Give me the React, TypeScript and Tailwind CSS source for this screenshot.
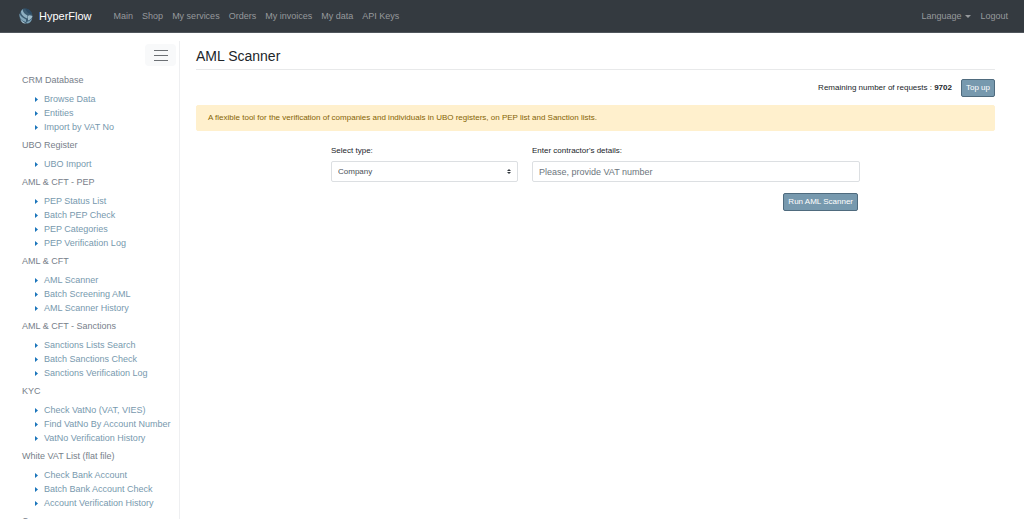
import React from "react";

type Group = { title: string; items: string[] };

const groups: Group[] = [
  { title: "CRM Database", items: ["Browse Data", "Entities", "Import by VAT No"] },
  { title: "UBO Register", items: ["UBO Import"] },
  { title: "AML & CFT - PEP", items: ["PEP Status List", "Batch PEP Check", "PEP Categories", "PEP Verification Log"] },
  { title: "AML & CFT", items: ["AML Scanner", "Batch Screening AML", "AML Scanner History"] },
  { title: "AML & CFT - Sanctions", items: ["Sanctions Lists Search", "Batch Sanctions Check", "Sanctions Verification Log"] },
  { title: "KYC", items: ["Check VatNo (VAT, VIES)", "Find VatNo By Account Number", "VatNo Verification History"] },
  { title: "White VAT List (flat file)", items: ["Check Bank Account", "Batch Bank Account Check", "Account Verification History"] },
  { title: "C", items: [] },
];

const navItems = ["Main", "Shop", "My services", "Orders", "My invoices", "My data", "API Keys"];

function Logo() {
  return (
    <svg viewBox="0 0 28 32" className="h-4 w-3.5" aria-hidden="true">
      <path d="M9 1 C20 0 27 8 27 17 C27 25 22 31 14 31 C6 31 0 25 1 13 C2 7 5 3 9 1Z" fill="#3b5a70" />
      <path d="M12 1 C20 1 25 6 26 13 C20 12 15 8 12 1Z" fill="#2c4a63" />
      <path d="M7 2 C8 9 11 12 17 15 V21 C9 18 4 13 4 7Z" fill="#8fb0c2" />
      <path d="M1 11 C3 17 8 20 14 23 V28 C6 26 0 21 1 11Z" fill="#83a7bb" />
      <path d="M3 23 C6 26 9 28 14 31 C9 32 5 29 3 23Z" fill="#adc6d2" />
      <path d="M18 16 C20 13 23 15 27 16 C26 20 23 23 18 25Z" fill="#9dbac9" />
      <path d="M15 28 C19 27 23 25 26 21 C25 27 21 31 15 31Z" fill="#7da2b6" />
    </svg>
  );
}

function Navbar() {
  return (
    <header className="flex h-[33px] items-center border-b border-[#50565c] bg-[#343a40] pl-[19px] pr-4 text-[9px] leading-[14px] text-[#96999c]">
      <a href="#" className="flex items-center gap-1.5 text-[11px] text-white">
        <Logo />
        HyperFlow
      </a>
      <nav className="ml-[22px] flex gap-[9px]">
        {navItems.map((item) => (
          <a key={item} href="#">{item}</a>
        ))}
      </nav>
      <div className="ml-auto flex items-center gap-[9px]">
        <button type="button" className="flex items-center gap-1">
          Language
          <svg viewBox="0 0 6 3" className="h-[3px] w-1.5" fill="currentColor" aria-hidden="true">
            <path d="M0 0H6L3 3Z" />
          </svg>
        </button>
        <a href="#">Logout</a>
      </div>
    </header>
  );
}

function Sidebar() {
  return (
    <aside className="mt-2 w-[180px] shrink-0 border-r border-[#eeeff1] pl-[22px] text-[9px] leading-[14px]">
      <div className="flex justify-end pr-[3px] pt-[3px]">
        <button type="button" aria-label="Toggle menu" className="flex h-[22px] w-[31px] items-center justify-center rounded-sm bg-[#f8f9fa]">
          <svg viewBox="0 0 14 11" className="h-[11px] w-3.5" stroke="#6c7074" aria-hidden="true">
            <path d="M0 .5H14M0 5.5H14M0 10.5H14" />
          </svg>
        </button>
      </div>
      <nav className="mt-[7px] flex flex-col gap-1">
        {groups.map((group) => (
          <section key={group.title}>
            <h2 className="text-[#77808a]">{group.title}</h2>
            <ul className="mt-[5px]">
              {group.items.map((item) => (
                <li key={item} className="flex items-center gap-1.5 whitespace-nowrap pl-[13px] text-[#7799ae]">
                  <svg viewBox="0 0 3 6" className="h-1.5 w-[3px]" fill="#1b75bb" aria-hidden="true">
                    <path d="M0 1L3 3.5L0 6Z" />
                  </svg>
                  <a href="#">{item}</a>
                </li>
              ))}
            </ul>
          </section>
        ))}
      </nav>
    </aside>
  );
}

const actionButton = "h-[18px] rounded-xs border border-[#4f6b7e] bg-[#7799ae] px-1 text-white";

function Scanner() {
  return (
    <main className="min-w-0 flex-1 pl-4 pr-[29px] pt-[13px] text-[8px] text-[#212529]">
      <h1 className="border-b border-[#e8e9ea] pb-[3px] text-[14px] leading-5">AML Scanner</h1>
      <div className="mt-[9px] flex items-center justify-end gap-[9px]">
        <p>
          Remaining number of requests : <b>9702</b>
        </p>
        <button type="button" className={actionButton}>Top up</button>
      </div>
      <p className="mt-2 rounded-xs border border-[#fff0cd] bg-[#fff0cd] px-[11px] py-1.5 leading-3 text-[#856404]">
        A flexible tool for the verification of companies and individuals in UBO registers, on PEP list and Sanction lists.
      </p>
      <form className="mx-auto mt-[13px] w-2/3 max-w-[529px]" onSubmit={(e) => e.preventDefault()}>
        <div className="flex gap-3.5">
          <div className="w-[187px]">
            <label htmlFor="type" className="block leading-[14px]">Select type:</label>
            <div className="relative mt-[3px]">
              <select id="type" className="h-[21px] w-full appearance-none rounded-xs border border-[#dcdfe2] bg-white px-1.5 text-[#495057]">
                <option>Company</option>
                <option>Individual</option>
              </select>
              <svg viewBox="0 0 4 5" className="pointer-events-none absolute right-[7px] top-2 h-[5px] w-1" fill="#343a40" aria-hidden="true">
                <path d="M2 0L0 2H4ZM2 5L0 3H4Z" />
              </svg>
            </div>
          </div>
          <div className="flex-1">
            <label htmlFor="details" className="block leading-[14px]">Enter contractor's details:</label>
            <input
              id="details"
              type="text"
              placeholder="Please, provide VAT number"
              className="mt-[3px] block h-[21px] w-full rounded-xs border border-[#dcdfe2] px-1.5 text-[9px] placeholder:text-[#6c757d]"
            />
          </div>
        </div>
        <div className="mt-[11px] flex justify-end pr-0.5">
          <button type="submit" className={actionButton}>Run AML Scanner</button>
        </div>
      </form>
    </main>
  );
}

export default function App() {
  return (
    <div className="flex h-screen flex-col overflow-hidden bg-white font-['Liberation_Sans',Arial,sans-serif]">
      <Navbar />
      <div className="flex min-h-0 flex-1">
        <Sidebar />
        <Scanner />
      </div>
    </div>
  );
}
